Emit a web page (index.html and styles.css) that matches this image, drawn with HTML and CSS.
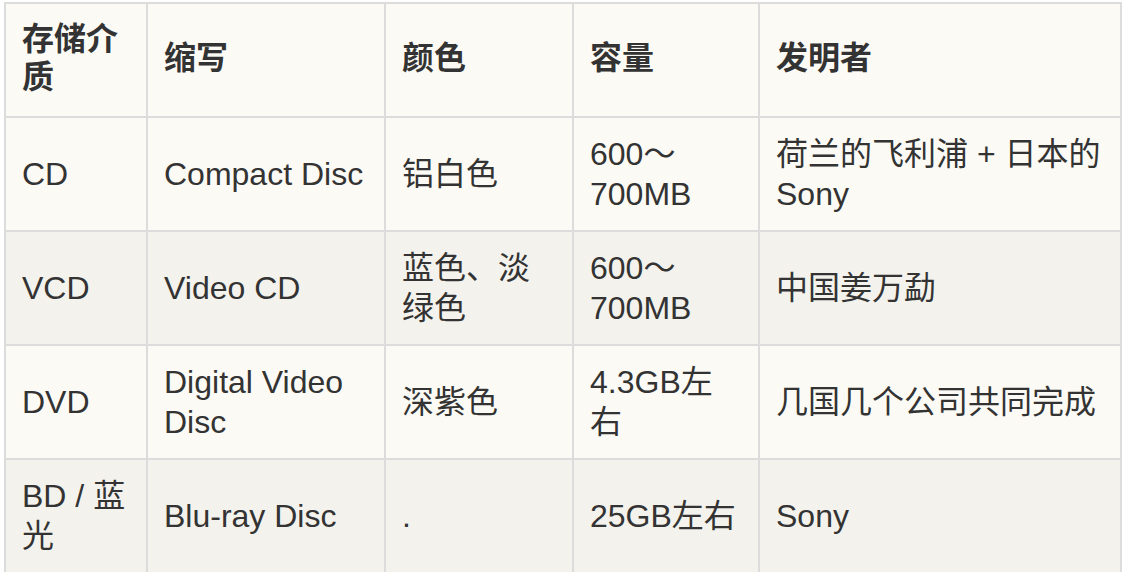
FILE: index.html
```html
<!DOCTYPE html>
<html lang="zh-CN">
<head>
<meta charset="utf-8">
<title>存储介质</title>
<link rel="stylesheet" href="styles.css">
</head>
<body>
<table class="media-table">
  <thead>
    <tr>
      <th class="c1">存储介质</th>
      <th class="c2">缩写</th>
      <th class="c3">颜色</th>
      <th class="c4">容量</th>
      <th class="c5">发明者</th>
    </tr>
  </thead>
  <tbody>
    <tr>
      <td>CD</td>
      <td>Compact Disc</td>
      <td>铝白色</td>
      <td>600～700MB</td>
      <td>荷兰的飞利浦 + 日本的 Sony</td>
    </tr>
    <tr class="alt">
      <td>VCD</td>
      <td>Video CD</td>
      <td>蓝色、淡绿色</td>
      <td>600～700MB</td>
      <td>中国姜万勐</td>
    </tr>
    <tr>
      <td>DVD</td>
      <td>Digital Video Disc</td>
      <td>深紫色</td>
      <td>4.3GB左右</td>
      <td>几国几个公司共同完成</td>
    </tr>
    <tr class="alt">
      <td>BD / 蓝光</td>
      <td>Blu-ray Disc</td>
      <td>.</td>
      <td>25GB左右</td>
      <td>Sony</td>
    </tr>
  </tbody>
</table>
</body>
</html>
```
FILE: styles.css
```css
html, body {
  margin: 0;
  padding: 0;
  background: #ffffff;
}

body {
  font-family: "Liberation Sans", "Noto Sans CJK SC", sans-serif;
  color: #333333;
}

.media-table {
  margin: 2px 0 0 4px;
  width: 1118px;
  table-layout: fixed;
  border-collapse: separate;
  border-spacing: 0;
  border-top: 2px solid #dcdcdc;
  border-left: 2px solid #dcdcdc;
  font-size: 32px;
  line-height: 40px;
}

.media-table th,
.media-table td {
  box-sizing: border-box;
  padding: 16px;
  border-right: 2px solid #dcdcdc;
  border-bottom: 2px solid #dcdcdc;
  text-align: left;
  vertical-align: middle;
  background: #fcfaf5;
}

.media-table th {
  font-weight: bold;
  line-height: 38px;
  padding: 16px 16px 20px;
}

.media-table .alt td {
  background: #f3f2ed;
}

.c1 { width: 142px; }
.c2 { width: 238px; }
.c3 { width: 188px; }
.c4 { width: 186px; }
.c5 { width: 362px; }
```
